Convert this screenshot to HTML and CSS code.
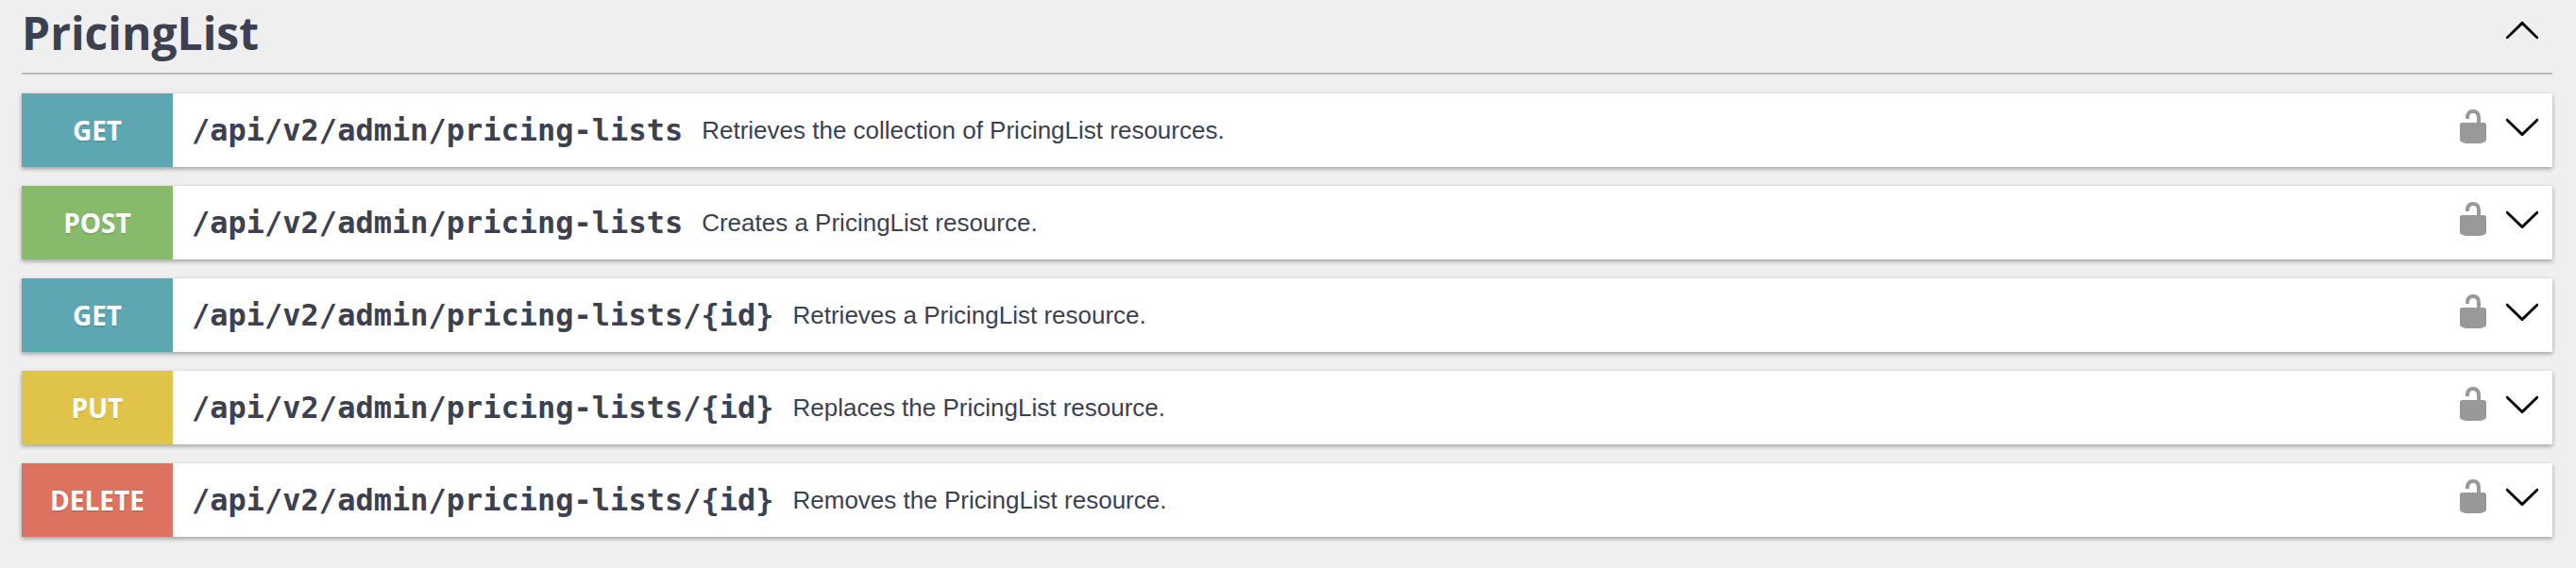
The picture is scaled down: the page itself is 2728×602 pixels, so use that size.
FILE: index.html
```html
<!DOCTYPE html>
<html lang="en">
<head>
<meta charset="utf-8">
<title>PricingList API</title>
<link rel="stylesheet" href="styles.css">
</head>
<body>
<svg class="sprite" aria-hidden="true">
  <symbol id="arrow-up" viewBox="0 0 20 20"><path d="M17.418 14.908c.272.27.709.27.979 0 .271-.268.271-.701 0-.969l-7.908-7.83c-.27-.268-.707-.268-.979 0l-7.908 7.83c-.27.268-.27.701 0 .969.271.268.709.268.979 0L10 7.767l7.418 7.141z"/></symbol>
  <symbol id="arrow-down" viewBox="0 0 20 20"><path d="M17.418 6.109c.272-.268.709-.268.979 0s.271.701 0 .969l-7.908 7.83c-.27.268-.707.268-.979 0l-7.908-7.83c-.27-.268-.27-.701 0-.969.271-.268.709-.268.979 0L10 13.25l7.418-7.141z"/></symbol>
  <symbol id="unlocked" viewBox="0 0 20 20"><path d="M15.8 8H14V5.6C14 2.703 12.665 1 10 1 7.334 1 6 2.703 6 5.6V6h2v-.801C8 3.754 8.797 3 10 3c1.203 0 2 .754 2 2.199V8H4c-.553 0-1 .646-1 1.199V17c0 .549.428 1.139.951 1.307l1.197.387C5.672 18.861 6.55 19 7.1 19h5.8c.549 0 1.428-.139 1.951-.307l1.196-.387c.524-.167.953-.757.953-1.306V9.199C17 8.646 16.352 8 15.8 8z"/></symbol>
</svg>
<main class="section">
  <header class="section-header">
    <h2 class="section-title">PricingList</h2>
    <button class="icon-button" type="button" aria-label="Collapse section" aria-expanded="true"><svg class="icon"><use href="#arrow-up"/></svg></button>
  </header>
  <div class="operations">
    <article class="operation">
      <button class="summary" type="button">
        <span class="method method-get">GET</span>
        <span class="path">/api/v2/admin/pricing-lists</span>
        <span class="description">Retrieves the collection of PricingList resources.</span>
      </button>
      <button class="icon-button lock" type="button" aria-label="Authorize"><svg class="icon"><use href="#unlocked"/></svg></button>
      <button class="icon-button" type="button" aria-label="Expand operation"><svg class="icon"><use href="#arrow-down"/></svg></button>
    </article>
    <article class="operation">
      <button class="summary" type="button">
        <span class="method method-post">POST</span>
        <span class="path">/api/v2/admin/pricing-lists</span>
        <span class="description">Creates a PricingList resource.</span>
      </button>
      <button class="icon-button lock" type="button" aria-label="Authorize"><svg class="icon"><use href="#unlocked"/></svg></button>
      <button class="icon-button" type="button" aria-label="Expand operation"><svg class="icon"><use href="#arrow-down"/></svg></button>
    </article>
    <article class="operation">
      <button class="summary" type="button">
        <span class="method method-get">GET</span>
        <span class="path">/api/v2/admin/pricing-lists/{id}</span>
        <span class="description">Retrieves a PricingList resource.</span>
      </button>
      <button class="icon-button lock" type="button" aria-label="Authorize"><svg class="icon"><use href="#unlocked"/></svg></button>
      <button class="icon-button" type="button" aria-label="Expand operation"><svg class="icon"><use href="#arrow-down"/></svg></button>
    </article>
    <article class="operation">
      <button class="summary" type="button">
        <span class="method method-put">PUT</span>
        <span class="path">/api/v2/admin/pricing-lists/{id}</span>
        <span class="description">Replaces the PricingList resource.</span>
      </button>
      <button class="icon-button lock" type="button" aria-label="Authorize"><svg class="icon"><use href="#unlocked"/></svg></button>
      <button class="icon-button" type="button" aria-label="Expand operation"><svg class="icon"><use href="#arrow-down"/></svg></button>
    </article>
    <article class="operation">
      <button class="summary" type="button">
        <span class="method method-delete">DELETE</span>
        <span class="path">/api/v2/admin/pricing-lists/{id}</span>
        <span class="description">Removes the PricingList resource.</span>
      </button>
      <button class="icon-button lock" type="button" aria-label="Authorize"><svg class="icon"><use href="#unlocked"/></svg></button>
      <button class="icon-button" type="button" aria-label="Expand operation"><svg class="icon"><use href="#arrow-down"/></svg></button>
    </article>
  </div>
</main>
</body>
</html>
```

FILE: styles.css
```css
* {
  box-sizing: border-box;
}

body {
  margin: 0;
  background: #efefef;
  color: #3b4151;
  font-family: "Liberation Sans", Arial, sans-serif;
}

.sprite {
  display: none;
}

.section {
  padding: 2px 25px 20px 23px;
}

.section-header {
  display: flex;
  align-items: center;
  justify-content: space-between;
  padding: 0 12px 10px 0;
  border-bottom: 2px solid #b9bac1;
}

.section-title {
  margin: 0;
  font: bold 48px/65px "Open Sans", sans-serif;
}

.operations {
  display: flex;
  flex-direction: column;
  gap: 20px;
  padding-top: 20px;
}

.operation {
  display: flex;
  align-items: center;
  gap: 12px;
  padding-right: 12px;
  background: #fff;
  box-shadow: 0 2px 6px rgba(0, 0, 0, 0.12), 0 2px 4px rgba(0, 0, 0, 0.24);
}

.summary {
  display: flex;
  flex: 1;
  align-items: center;
  gap: 20px;
  padding: 0;
  border: 0;
  background: none;
  color: inherit;
  font: inherit;
  text-align: left;
  cursor: pointer;
}

.method {
  width: 160px;
  padding: 20px 0;
  color: #fff;
  font: bold 28px/38px "Open Sans", sans-serif;
  text-align: center;
  text-shadow: 0 2px 0 rgba(0, 0, 0, 0.1);
}

.method-get {
  background: #5da7b3;
}

.method-post {
  background: #87ba6b;
}

.method-put {
  background: #dfc34b;
}

.method-delete {
  background: #dd7260;
}

.path {
  font: bold 32px/38px "DejaVu Sans Mono", monospace;
}

.description {
  font-size: 26px;
  line-height: 30px;
}

.icon-button {
  padding: 0 0 8px;
  border: 0;
  background: none;
  color: #000;
  cursor: pointer;
}

.lock {
  color: #999;
}

.icon {
  display: block;
  width: 40px;
  height: 40px;
  fill: currentColor;
}
```
